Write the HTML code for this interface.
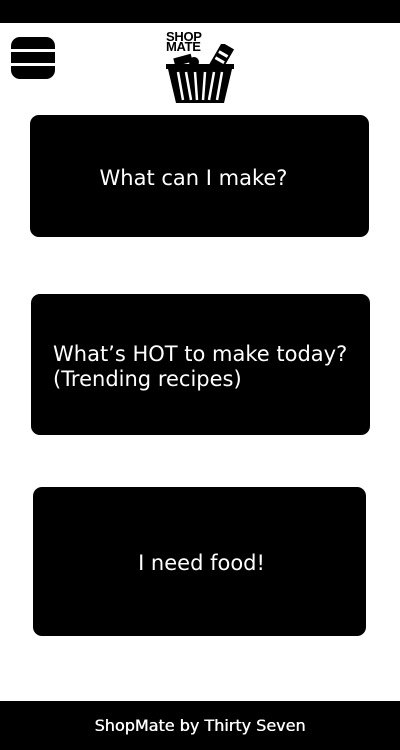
<!DOCTYPE html>
<html><head><meta charset="utf-8"><style>
body{margin:0;width:400px;height:750px;position:relative;background:#fff;font-family:"DejaVu Sans",sans-serif;overflow:hidden}
.top{position:absolute;left:0;top:0;width:400px;height:23px;background:#000}
.ham{position:absolute;left:11px;top:37px;width:44px;height:42px;background:#000;border-radius:9px}
.ham i{position:absolute;left:0;width:44px;height:3px;background:#fff}
.btn{position:absolute;background:#000;color:#fff;border-radius:9px;display:flex;align-items:center;justify-content:center;font-size:21px;line-height:25px;padding-top:4px;box-sizing:border-box}
.foot{position:absolute;left:0;top:701px;width:400px;height:49px;background:#000;color:#fff;font-size:16px;text-align:center;line-height:49px;font-weight:normal;text-shadow:0.4px 0 0 #fff}
.logo{position:absolute;left:166px;top:32px;font-family:"Liberation Sans",sans-serif;font-weight:bold;font-size:13px;line-height:10px;letter-spacing:-0.3px}
</style></head><body>
<div class="top"></div>
<div class="ham"><i style="top:12px"></i><i style="top:26px"></i></div>
<div class="logo">SHOP<br>MATE</div>
<svg style="position:absolute;left:166px;top:44px" width="68" height="60" viewBox="0 0 68 60">
<g transform="rotate(30 55 14)"><rect x="48" y="0" width="14" height="28" fill="#000"/><rect x="50" y="8" width="10" height="3" fill="#fff"/><rect x="50" y="15" width="10" height="3" fill="#fff"/></g>
<rect x="8" y="12" width="18" height="8" fill="#000" transform="rotate(-15 17 16)"/>
<circle cx="28" cy="18" r="5" fill="#000"/>
<rect x="0" y="20" width="68" height="5" fill="#000"/>
<polygon points="2,25 66,25 58,59 10,59" fill="#000"/>
<g stroke="#fff" stroke-width="2.5"><line x1="12" y1="28" x2="17" y2="56"/><line x1="20" y1="28" x2="25" y2="56"/><line x1="29" y1="28" x2="31" y2="56"/><line x1="39" y1="28" x2="37" y2="56"/><line x1="48" y1="28" x2="43" y2="56"/><line x1="56" y1="28" x2="51" y2="56"/></g>
</svg>
<div class="btn" style="left:30px;top:115px;width:339px;height:122px;padding-right:12px">What can I make?</div>
<div class="btn" style="left:31px;top:294px;width:339px;height:141px;justify-content:flex-start;padding-left:22px">What’s HOT to make today?<br>(Trending recipes)</div>
<div class="btn" style="left:33px;top:487px;width:333px;height:149px;padding-left:4px">I need food!</div>
<div class="foot">ShopMate by Thirty Seven</div>
</body></html>
